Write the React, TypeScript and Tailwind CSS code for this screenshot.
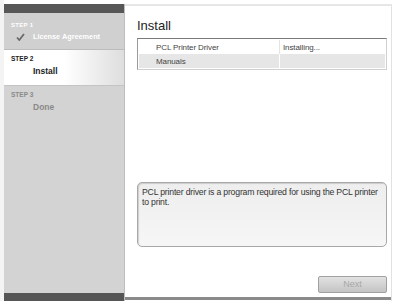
import React from "react";

export default function App() {
  return (
    <div
      className="w-[395px] h-[301px] bg-white flex overflow-hidden"
      style={{ fontFamily: '"Liberation Sans", Arial, sans-serif' }}
    >
      <div className="w-[4px] shrink-0 bg-[#f4f4f4]" />
      {/* Sidebar */}
      <div className="w-[121px] shrink-0 mt-[4px] flex flex-col bg-[#d3d3d3] border-r border-[#bdbdbd]">
        <div className="h-[9px] bg-[#575757]" />
        <div className="h-[37px] bg-[#d0d0d0] border-b border-[#bcbcbc] pl-[7px] pt-[9px] text-white">
          <div className="text-[6px] font-bold leading-[7px] tracking-[0.3px]">STEP 1</div>
          <div className="flex items-center mt-[3px]">
            <svg width="9" height="8" viewBox="0 0 9 8" className="ml-[5px]">
              <path d="M1 4.5 L3.3 7 L8 1" fill="none" stroke="#6a6a6a" strokeWidth="1.8" />
            </svg>
            <span className="ml-[8px] text-[7.3px] font-bold leading-[9px]">License Agreement</span>
          </div>
        </div>
        <div className="h-[35px] bg-gradient-to-r from-white via-white to-[#dedede] pl-[7px] pt-[5px] text-[#222]">
          <div className="text-[6.5px] font-bold leading-[7px]">STEP 2</div>
          <div className="text-[8.5px] font-bold leading-[10px] mt-[4px] ml-[22px]">Install</div>
        </div>
        <div className="flex-1 pl-[7px] pt-[5px] text-[#8a8a8a] border-t border-[#c4c4c4]">
          <div className="text-[6.5px] font-bold leading-[7px]">STEP 3</div>
          <div className="text-[8.5px] font-bold leading-[10px] mt-[4px] ml-[22px]">Done</div>
        </div>
        <div className="h-[8px] bg-[#555555]" />
      </div>
      {/* Main */}
      <div className="w-[267px] shrink-0 mt-[4px] flex flex-col border-t-2 border-[#e6e6e6] border-r border-r-[#e2e2e2]">
        <div className="flex-1 flex flex-col pl-[12px] pr-[4px]">
          <div className="text-[13px] leading-[15px] text-[#222] mt-[12px]">Install</div>
          <div className="mt-[5px] border border-[#d0d0d0] border-t-[#7a7a7a] border-l-[#9a9a9a] p-[1px] text-[8px] text-[#444] leading-[13px] tracking-[-0.1px]">
            <div className="flex h-[14px] items-center">
              <div className="w-[141px] pl-[17px] border-r border-[#e4e4e4] h-full flex items-center">PCL Printer Driver</div>
              <div className="pl-[3px]">Installing...</div>
            </div>
            <div className="flex h-[14px] items-center bg-[#e6e6e6]">
              <div className="w-[141px] pl-[17px] border-r border-white h-full flex items-center">Manuals</div>
              <div className="pl-[3px]" />
            </div>
          </div>
          <div className="mt-[112px] h-[65px] rounded-[5px] border border-[#a8a8a8] bg-gradient-to-b from-[#eeeeee] to-[#f6f6f6] px-[4px] pt-[4px] text-[8.7px] leading-[10px] tracking-[-0.2px] text-[#333] shadow-[inset_1px_1px_1px_rgba(0,0,0,0.15)]">
            PCL printer driver is a program required for using the PCL printer to print.
          </div>
          <div className="flex justify-end mt-[29px]">
            <div className="w-[69px] h-[17px] rounded-[2px] border border-[#a0a0a0] bg-gradient-to-b from-[#e2e2e2] to-[#c4c4c4] flex items-center justify-center text-[9px] text-[#a8a8a8]">
              Next
            </div>
          </div>
        </div>
        <div className="h-[3px] bg-[#8a8a8a] mb-[1px]" />
      </div>
      <div className="flex-1 bg-white" />
    </div>
  );
}
